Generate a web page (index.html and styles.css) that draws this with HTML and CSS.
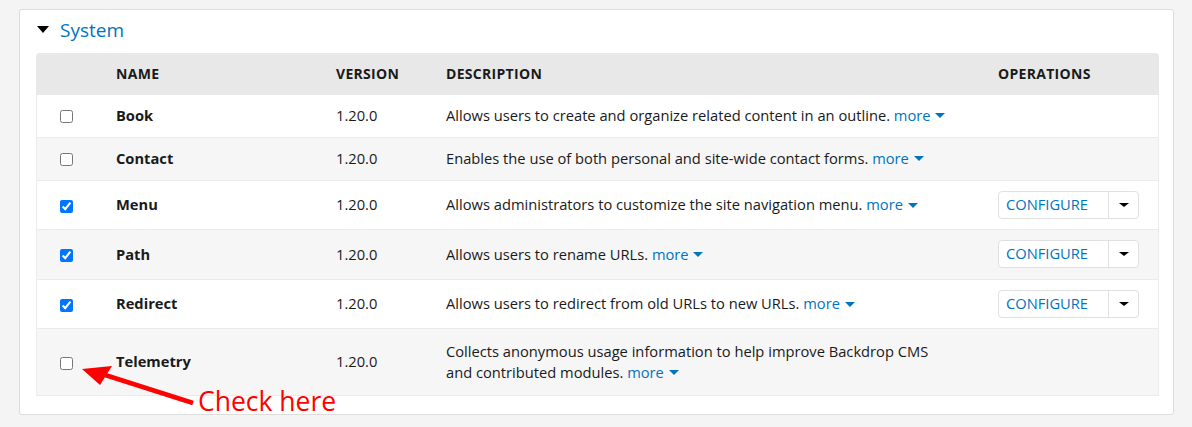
FILE: index.html
```html
<!DOCTYPE html>
<html>
<head>
<meta charset="utf-8">
<link rel="stylesheet" href="styles.css">
</head>
<body>
<div class="page">
  <div class="fieldset">
    <div class="legend"><span class="tri"></span><span class="legend-text">System</span></div>
    <table class="modules">
      <colgroup>
        <col class="c-check"><col class="c-name"><col class="c-ver"><col class="c-desc"><col class="c-ops">
      </colgroup>
      <thead>
        <tr><th></th><th>Name</th><th>Version</th><th>Description</th><th>Operations</th></tr>
      </thead>
      <tbody>
        <tr class="odd">
          <td class="chk"><input type="checkbox"></td>
          <td class="name">Book</td><td>1.20.0</td>
          <td>Allows users to create and organize related content in an outline. <a class="more">more <span class="caret"></span></a></td>
          <td></td>
        </tr>
        <tr class="even">
          <td class="chk"><input type="checkbox"></td>
          <td class="name">Contact</td><td>1.20.0</td>
          <td>Enables the use of both personal and site-wide contact forms. <a class="more">more <span class="caret"></span></a></td>
          <td></td>
        </tr>
        <tr class="odd btnrow">
          <td class="chk"><input type="checkbox" checked></td>
          <td class="name">Menu</td><td>1.20.0</td>
          <td>Allows administrators to customize the site navigation menu. <a class="more">more <span class="caret"></span></a></td>
          <td><div class="split"><span class="cfg">CONFIGURE</span><span class="drop"><span class="dcaret"></span></span></div></td>
        </tr>
        <tr class="even btnrow">
          <td class="chk"><input type="checkbox" checked></td>
          <td class="name">Path</td><td>1.20.0</td>
          <td>Allows users to rename URLs. <a class="more">more <span class="caret"></span></a></td>
          <td><div class="split"><span class="cfg">CONFIGURE</span><span class="drop"><span class="dcaret"></span></span></div></td>
        </tr>
        <tr class="odd btnrow">
          <td class="chk"><input type="checkbox" checked></td>
          <td class="name">Redirect</td><td>1.20.0</td>
          <td>Allows users to redirect from old URLs to new URLs. <a class="more">more <span class="caret"></span></a></td>
          <td><div class="split"><span class="cfg">CONFIGURE</span><span class="drop"><span class="dcaret"></span></span></div></td>
        </tr>
        <tr class="even tall">
          <td class="chk"><input type="checkbox"></td>
          <td class="name">Telemetry</td><td>1.20.0</td>
          <td>Collects anonymous usage information to help improve Backdrop CMS<br>and contributed modules. <a class="more">more <span class="caret"></span></a></td>
          <td></td>
        </tr>
      </tbody>
    </table>
    <svg class="arrow" width="130" height="50" viewBox="0 0 130 50">
      <line x1="115" y1="40" x2="24" y2="11" stroke="#f00" stroke-width="4.5"/>
      <polygon points="4,6 34,3 22,22" fill="#f00"/>
    </svg>
    <span class="note">Check here</span>
  </div>
</div>
</body>
</html>
```

FILE: styles.css
```css
html, body { margin: 0; padding: 0; }
body {
  background: #f4f4f4;
  font-family: "Open Sans", "DejaVu Sans", sans-serif;
  color: #1a1a1a;
  width: 1192px;
  height: 427px;
  overflow: hidden;
}
.page { padding: 9px 18px 0 19px; }
.fieldset {
  position: relative;
  background: #fff;
  border: 1px solid #dcdcdc;
  border-radius: 3px;
  height: 406px;
  box-sizing: border-box;
  padding: 0 14px 0 16px;
}
.legend {
  display: flex;
  align-items: center;
  height: 40px;
  padding-left: 1px;
}
.tri {
  width: 0; height: 0;
  border-left: 6px solid transparent;
  border-right: 6px solid transparent;
  border-top: 7px solid #000;
  margin-right: 11px;
  margin-top: -1px;
}
.legend-text {
  color: #0074bd;
  font-size: 19px;
  line-height: 24px;
}
.modules {
  margin-top: 3px;
  width: 1123px;
  border-collapse: separate;
  border-spacing: 0;
  font-size: 14.7px;
}
.c-check { width: 68px; }
.c-name { width: 220px; }
.c-ver { width: 110px; }
.c-desc { width: 552px; }
.c-ops { width: 173px; }
thead th {
  background: #e8e8e8;
  text-align: left;
  font-size: 14px;
  font-weight: bold;
  letter-spacing: 0.3px;
  text-transform: uppercase;
  height: 42px;
  padding: 0 12px 1px;
  box-sizing: border-box;
}
thead th:first-child { border-top-left-radius: 4px; }
thead th:last-child { border-top-right-radius: 4px; }
tbody td {
  padding: 0 12px;
  height: 42px;
  line-height: 21px;
  border-bottom: 1px solid #ebebeb;
  vertical-align: middle;
  box-sizing: border-box;
}
tbody td:first-child { border-left: 1px solid #ebebeb; }
tbody td:last-child { border-right: 1px solid #ebebeb; }
tbody tr.odd td { background: #fff; }
tbody tr.even td { background: #f6f6f6; }
tbody tr:nth-child(1) td { height: 43px; padding-bottom: 2px; }
tbody tr:nth-child(2) td { height: 43px; padding-bottom: 2px; }
tbody tr.btnrow td { height: 49px; padding-bottom: 1px; }
tbody tr:nth-child(4) td { height: 50px; }
tbody tr.tall td { height: 67px; padding-bottom: 1px; }
td.chk { padding-left: 20px; }
td.chk input { margin: 0 0 0 3px; width: 13px; height: 13px; vertical-align: middle; position: relative; top: 0; }
td.name { font-weight: bold; }
.more { color: #0074bd; text-decoration: none; }
.caret {
  display: inline-block;
  width: 0; height: 0;
  border-left: 5px solid transparent;
  border-right: 5px solid transparent;
  border-top: 5px solid #0074bd;
  vertical-align: middle;
  margin-left: 1px;
  position: relative; top: -1px;
}
.split {
  display: inline-flex;
  height: 28px;
  border: 1px solid #e0e0e0;
  border-radius: 4px;
  box-sizing: border-box;
  background: #fff;
}
.cfg {
  color: #0074bd;
  font-size: 14.7px;
  line-height: 25px;
  padding: 0 8px 0 7px;
  width: 110px;
  box-sizing: border-box;
  border-right: 1px solid #e0e0e0;
}
.drop {
  width: 29px;
  display: flex;
  align-items: center;
  justify-content: center;
}
.dcaret {
  width: 0; height: 0;
  border-left: 5px solid transparent;
  border-right: 5px solid transparent;
  border-top: 4px solid #000;
}
.arrow {
  position: absolute;
  left: 58px;
  top: 353px;
}
.note {
  position: absolute;
  left: 178px;
  top: 375px;
  color: #f00;
  font-size: 26.5px;
  line-height: 32px;
}
```
